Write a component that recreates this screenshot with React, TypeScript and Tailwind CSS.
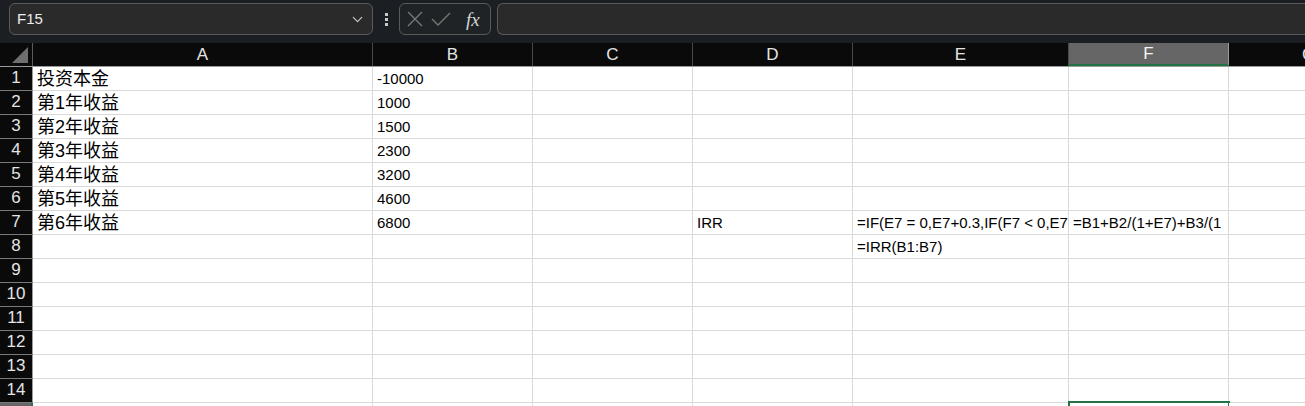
import { ChevronDown } from 'lucide-react'

const cols = [
	{ name: 'A', w: 'w-[340px]' },
	{ name: 'B', w: 'w-[160px]' },
	{ name: 'C', w: 'w-[160px]' },
	{ name: 'D', w: 'w-[160px]' },
	{ name: 'E', w: 'w-[216px]' },
	{ name: 'F', w: 'w-[160px]' },
	{ name: 'G', w: 'w-[160px]' },
]

const data: Record<number, string[]> = {
	1: ['投资本金', '-10000'],
	2: ['第1年收益', '1000'],
	3: ['第2年收益', '1500'],
	4: ['第3年收益', '2300'],
	5: ['第4年收益', '3200'],
	6: ['第5年收益', '4600'],
	7: ['第6年收益', '6800', '', 'IRR', '=IF(E7 = 0,E7+0.3,IF(F7 < 0,E7', '=B1+B2/(1+E7)+B3/(1'],
	8: ['', '', '', '', '=IRR(B1:B7)'],
}

const rows = Array.from({ length: 15 }, (_, i) => i + 1)

function Toolbar() {
	return <div className="h-[43px] bg-[#1b1f23] flex items-start pt-[3px] pl-[9px] gap-0">
		<div className="w-[364px] h-[32px] rounded-[6px] border border-[#5a5a5a] bg-[#2a2a2a] flex items-center justify-between pl-[7px] pr-[6px]">
			<span className="text-[15px] text-[#ececec] font-['Liberation_Sans',sans-serif]">F15</span>
			<ChevronDown className="text-[#cfcfcf]" size={17} strokeWidth={1.6} />
		</div>
		<div className="w-[26px] h-[32px] flex flex-col items-center justify-center gap-[2px]">
			<div className="w-[3px] h-[3px] bg-[#c8c8c8]"></div>
			<div className="w-[3px] h-[3px] bg-[#c8c8c8]"></div>
			<div className="w-[3px] h-[3px] bg-[#c8c8c8]"></div>
		</div>
		<div className="w-[92px] h-[32px] rounded-[6px] border border-[#5a5a5a] bg-[#1f2326] flex items-center pl-[6px] gap-[7px]">
			<svg width="18" height="18" viewBox="0 0 18 18" className="text-[#777]">
				<path d="M2 2 L16 16 M16 2 L2 16" stroke="currentColor" strokeWidth="1.4" fill="none" />
			</svg>
			<svg width="20" height="18" viewBox="0 0 20 18" className="text-[#777]">
				<path d="M1 9 L7 15 L19 3" stroke="currentColor" strokeWidth="1.4" fill="none" />
			</svg>
			<span className="ml-[8px] text-[19px] italic text-[#d6d6d6] font-['Liberation_Serif',serif] leading-none">fx</span>
		</div>
		<div className="ml-[6px] flex-1 h-[32px] rounded-l-[6px] border border-r-0 border-[#5a5a5a] bg-[#2a2a2a]"></div>
	</div>
}

function HeaderRow() {
	return <div className="flex h-[24px] border-b border-[#9a9a9a] bg-[#0a0a0a]">
		<div className="w-[33px] shrink-0 border-r border-[#5a5a5a] relative">
			<svg width="18" height="18" viewBox="0 0 18 18" className="absolute right-[3px] bottom-[2px]">
				<path d="M17 1 L17 17 L1 17 Z" fill="#6f6f6f" />
			</svg>
		</div>
		{cols.map(c => <div key={c.name}
			className={`${c.w} shrink-0 flex items-center justify-center text-[17px] font-['Liberation_Sans',sans-serif] border-r ${c.name === 'F' ? 'bg-[#666666] text-[#f4f4f4] border-[#9a9a9a] border-b-2 border-b-[#217346]' : 'text-[#e4e4e4] border-[#4a4a4a]'}`}>
			{c.name}
		</div>)}
	</div>
}

function Row({ n }: { n: number }) {
	const cells = data[n] || []
	const selected = n === 15
	return <div className="flex h-[24px] border-b border-[#dadada]">
		<div className={`w-[33px] shrink-0 flex items-end justify-center pb-[1px] text-[17px] leading-[22px] font-['Liberation_Sans',sans-serif] border-r border-b ${selected ? 'bg-[#666666] text-white border-r-2 border-r-[#217346]' : 'bg-[#0a0a0a] text-[#e4e4e4] border-r-[#9a9a9a]'} border-b-[#7a7a7a] -mb-[1px]`}>
			{n}
		</div>
		{cols.map((c, i) => {
			const v = cells[i] || ''
			const cjk = i === 0
			return <div key={c.name} className={`${c.w} shrink-0 relative border-r border-[#dadada] bg-white`}>
				<div className={`h-full overflow-hidden whitespace-nowrap flex items-end pl-[4px] ${cjk ? "text-[18px] leading-[22px] font-['Liberation_Sans','Noto_Sans_CJK_SC',sans-serif]" : "text-[15px] leading-[20px] pb-[1px] font-['Liberation_Sans',sans-serif]"} text-black`}>
					{v}
				</div>
				{selected && c.name === 'F' && <div className="absolute -left-[1px] -top-[2px] w-[162px] h-[26px] border-2 border-[#217346]"></div>}
			</div>
		})}
	</div>
}

export default function App() {
	return <div className="w-[1305px] h-[406px] overflow-hidden bg-white">
		<Toolbar />
		<div className="w-[1400px]">
			<HeaderRow />
			{rows.map(n => <Row key={n} n={n} />)}
		</div>
	</div>
}
